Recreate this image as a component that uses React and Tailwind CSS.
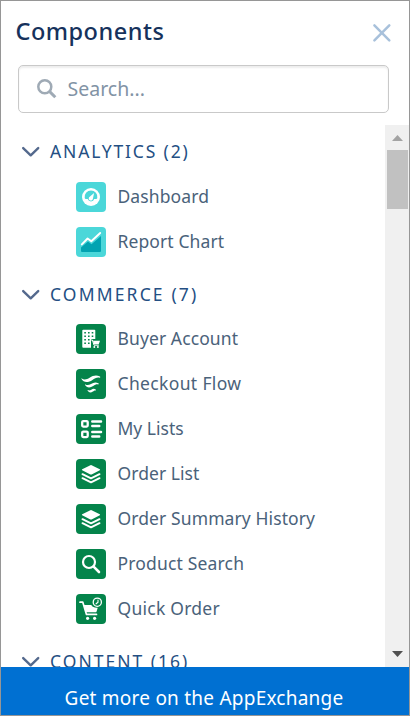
import React from "react";

const green = "#04844b";

function Tile({ color, children }) {
  return (
    <svg className="h-[30px] w-[30px] shrink-0" viewBox="0 0 30 30" fill="none" strokeLinecap="round" strokeLinejoin="round">
      <rect width="30" height="30" rx="4" fill={color} />
      {children}
    </svg>
  );
}

function DashboardIcon() {
  return (
    <Tile color="#4bd7d9">
      <circle cx="15" cy="15" r="9" fill="#fff" />
      <path d="M8.7 16A6.4 6.4 0 1 1 21.3 16Q21.2 17 20 17H18.2A3.3 3.3 0 0 1 11.8 17H10Q8.8 17 8.7 16Z" fill="#4bd7d9" />
      <path d="M18.1 11L16.9 16.8A2.1 2.1 0 1 1 13.7 14.7Z" fill="#fff" />
    </Tile>
  );
}

function ReportIcon() {
  return (
    <Tile color="#4bd7d9">
      <path d="M5 20.5L12 14.6L15.5 17.3L25 9V24Q25 25 24 25H6Q5 25 5 24Z" fill="#02a3b1" />
      <path d="M5.8 17.4L11.6 11.5L15.3 14.2L24.2 6" stroke="#fff" strokeWidth="1.9" />
    </Tile>
  );
}

function BuyerIcon() {
  return (
    <Tile color={green}>
      <path d="M7.2 5.7H18.4Q19.3 5.7 19.3 6.6V15H15V23.7H7.2Q6.3 23.7 6.3 22.8V6.6Q6.3 5.7 7.2 5.7Z" fill="#fff" />
      <path d="M8.3 8h1.6v1.6h-1.6zM12 8h1.6v1.6h-1.6zM15.7 8h1.6v1.6h-1.6zM8.3 11.5h1.6v1.6h-1.6zM12 11.5h1.6v1.6h-1.6zM15.7 11.5h1.6v1.6h-1.6zM8.3 15h1.6v1.6h-1.6zM12 15h1.6v1.6h-1.6zM8.3 18.5h1.6v1.6h-1.6zM12 18.5h1.6v1.6h-1.6z" fill={green} />
      <path d="M14.8 16H16.4L18 21.2H22.4" stroke="#fff" strokeWidth="1" />
      <path d="M17 16.8H24L22.7 20.3H18Z" fill="#fff" />
      <circle cx="18.3" cy="23.1" r="1" fill="#fff" />
      <circle cx="21.9" cy="23.1" r="1" fill="#fff" />
    </Tile>
  );
}

function FlowIcon() {
  return (
    <Tile color={green}>
      <path d="M5.8 9.4C7.6 11 10.6 10.9 13.6 8.8C17.2 6.2 20.6 5.6 24 7.5C24.6 8.1 24.3 8.8 23.5 8.7C20.7 8.3 18.8 9.3 16.4 11C12.4 13.9 7.6 14 5.5 10.1C5.3 9.6 5.5 9.2 5.8 9.4Z" fill="#fff" />
      <path d="M9.4 15.4C11 16.4 12.9 16.2 15 14.9C17.6 13.2 20 12.9 22.4 14.3C23 14.8 22.7 15.5 22 15.4C20.2 15.2 19 15.9 17.2 17.1C14 19.3 10.6 19 9.1 16.1C8.9 15.6 9.1 15.2 9.4 15.4Z" fill="#fff" />
      <path d="M11.9 21C13.1 21.7 14.1 21.4 15.3 20.7C17 19.6 18.3 19.6 19.7 20.4C20.2 20.9 19.9 21.5 19.3 21.4C18.4 21.4 17.8 21.9 16.9 22.5C14.9 23.9 12.6 23.7 11.6 21.6C11.4 21.1 11.6 20.8 11.9 21Z" fill="#fff" />
    </Tile>
  );
}

function ListsIcon() {
  return (
    <Tile color={green}>
      <rect x="6.2" y="7.1" width="5.5" height="5.5" rx="1" stroke="#fff" strokeWidth="2.3" />
      <rect x="6.2" y="17.6" width="5.5" height="5.5" rx="1" stroke="#fff" strokeWidth="2.3" />
      <path d="M16.3 7.5H25M16.3 12.1H23.2M16.3 17.9H25M16.3 22.5H23.2" stroke="#fff" strokeWidth="2.5" />
    </Tile>
  );
}

function LayersIcon() {
  return (
    <Tile color={green}>
      <path d="M14.4 6.2Q15 5.9 15.6 6.2L23.8 10.3Q24.5 10.8 23.8 11.3L15.6 15.4Q15 15.7 14.4 15.4L6.2 11.3Q5.5 10.8 6.2 10.3Z" fill="#fff" />
      <path d="M6.5 15.2L15 19.3L23.5 15.2M6.5 19.2L15 23.3L23.5 19.2" stroke="#fff" strokeWidth="2" />
    </Tile>
  );
}

function ProductSearchIcon() {
  return (
    <Tile color={green}>
      <circle cx="13" cy="13" r="6" stroke="#fff" strokeWidth="2.2" />
      <path d="M17.6 17.6L23 23" stroke="#fff" strokeWidth="2.6" />
    </Tile>
  );
}

function QuickOrderIcon() {
  return (
    <Tile color={green}>
      <path d="M4 8.2H6.8L10.5 20.4H20.5" stroke="#fff" strokeWidth="1.7" />
      <path d="M7.6 11H15.3Q16.8 14 21.7 13.7L20.6 17.4Q20.3 18.3 19.3 18.3H9.8Z" fill="#fff" />
      <circle cx="11.6" cy="24.3" r="1.6" fill="#fff" />
      <circle cx="18.6" cy="24.3" r="1.6" fill="#fff" />
      <circle cx="21.3" cy="8.2" r="4.1" stroke="#fff" strokeWidth="1.3" />
      <path d="M22 6V8.3L20.1 9.8" stroke="#fff" strokeWidth="1.1" />
    </Tile>
  );
}

function Item({ icon, label, tracking }) {
  return (
    <li className="flex h-[45px] items-center pl-[75px]">
      {icon}
      <span className={"ml-[11.5px] whitespace-nowrap pb-[1px] text-[17.5px] leading-[30px] text-[#4a627a] " + tracking}>{label}</span>
    </li>
  );
}

function Heading({ label, tracking }) {
  return (
    <h2 className="flex h-[30px] items-center pl-[20px]">
      <svg className="h-[12px] w-[20px] shrink-0" viewBox="0 0 20 12" fill="none">
        <path d="M2.2 2.1L9.7 9.3L17.2 2.1" stroke="#54698d" strokeWidth="2.4" strokeLinecap="round" strokeLinejoin="round" />
      </svg>
      <span className={"ml-[9px] whitespace-nowrap pb-[2px] text-[17.5px] leading-[30px] text-[#244f83] " + tracking}>{label}</span>
    </h2>
  );
}

export default function App() {
  return (
    <div className="flex h-[716px] w-[410px] flex-col overflow-hidden border border-[#969696] bg-white font-['Noto_Sans',sans-serif]">
      <header className="flex h-[64px] shrink-0 items-start justify-between pl-[14.5px] pr-[17px]">
        <h1 className="mt-[14px] text-[23.5px] font-medium leading-[32px] tracking-[0.5px] text-[#16325c]">Components</h1>
        <svg className="mt-[22px] h-[20px] w-[20px]" viewBox="0 0 20 20" fill="none">
          <path d="M2.4 2.4L17.3 17.3M17.3 2.4L2.4 17.3" stroke="#a8c1db" strokeWidth="2.5" strokeLinecap="round" />
        </svg>
      </header>
      <div className="ml-[17px] flex h-[48px] w-[371px] shrink-0 items-center rounded-[5px] border border-[#c9c9c9] pl-[17px] shadow-[inset_0_2px_2px_rgba(0,0,0,0.07)]">
        <svg className="h-[22px] w-[22px]" viewBox="0 0 22 22" fill="none">
          <circle cx="8.8" cy="8.7" r="6.5" stroke="#9faab5" strokeWidth="2.5" />
          <path d="M13.7 13.6L19.3 19.2" stroke="#9faab5" strokeWidth="3" />
        </svg>
        <span className="ml-[9.5px] text-[19.5px] leading-[30px] text-[#8293a5]">Search...</span>
      </div>
      <div className="mt-[12px] flex h-[542px] shrink-0 overflow-hidden">
        <main className="flex-1 overflow-hidden pt-[12px]">
          <Heading label="ANALYTICS (2)" tracking="tracking-[1.85px]" />
          <ul className="mt-[7px]">
            <Item icon={<DashboardIcon />} label="Dashboard" tracking="tracking-[0.1px]" />
            <Item icon={<ReportIcon />} label="Report Chart" tracking="tracking-[0.1px]" />
          </ul>
          <div className="mt-[16px]">
            <Heading label="COMMERCE (7)" tracking="tracking-[2.15px]" />
          </div>
          <ul className="mt-[6px]">
            <Item icon={<BuyerIcon />} label="Buyer Account" tracking="tracking-[0.1px]" />
            <Item icon={<FlowIcon />} label="Checkout Flow" tracking="tracking-[0.35px]" />
            <Item icon={<ListsIcon />} label="My Lists" tracking="tracking-[0px]" />
            <Item icon={<LayersIcon />} label="Order List" tracking="tracking-[0.05px]" />
            <Item icon={<LayersIcon />} label="Order Summary History" tracking="tracking-[0.1px]" />
            <Item icon={<ProductSearchIcon />} label="Product Search" tracking="tracking-[0.17px]" />
            <Item icon={<QuickOrderIcon />} label="Quick Order" tracking="tracking-[0.25px]" />
          </ul>
          <div className="mt-[16px]">
            <Heading label="CONTENT (16)" tracking="tracking-[2px]" />
          </div>
        </main>
        <div className="flex w-[24px] shrink-0 flex-col items-center bg-[#f0f0f0]">
          <svg className="h-[25px] w-[24px] shrink-0" viewBox="0 0 24 25">
            <path d="M7 16L12.5 10L18 16Z" fill="#a3a3a3" />
          </svg>
          <div className="h-[59px] w-[21px] bg-[#c1c1c1]" />
          <svg className="mt-auto h-[25px] w-[24px] shrink-0" viewBox="0 0 24 25">
            <path d="M7 9L12.5 15L18 9Z" fill="#505050" />
          </svg>
        </div>
      </div>
      <footer className="flex flex-1 justify-center bg-[#0070d2] pt-[16px]">
        <span className="-ml-[2px] whitespace-nowrap text-[19px] leading-[30px] tracking-[0.23px] text-white">Get more on the AppExchange</span>
      </footer>
    </div>
  );
}
